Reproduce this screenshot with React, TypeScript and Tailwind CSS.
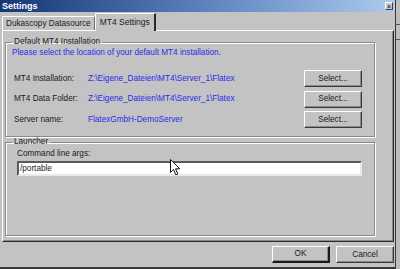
import React from "react";

const Btn = ({ label, main = false }: { label: string; main?: boolean }) => (
  <button
    className={
      "h-[17px] w-[58px] bg-[#c3c3c3] text-[#1a1a1a] border border-t-white border-l-white shadow-[inset_-1px_-1px_0_#8a8a8a] " +
      (main ? "border-r-[#1a1a1a] border-b-[#1a1a1a] border-r-2 border-b-2" : "border-r-[#3a3a3a] border-b-[#3a3a3a]")
    }
  >
    {label}
  </button>
);

const Row = ({ label, value }: { label: string; value: string }) => (
  <div className="flex items-center h-[17px]">
    <span className="w-[74px] pl-[8px] box-content">{label}</span>
    <span className="flex-1 text-[#2b2bea]">{value}</span>
    <Btn label="Select..." />
  </div>
);

const App = () => {
  return (
    <div className="w-[400px] h-[269px] overflow-hidden flex bg-[#c3c3c3] font-['Liberation_Sans',Arial,sans-serif] text-[8.2px] leading-[10px] text-[#1a1a1a] relative">
      <div className="w-[395px] flex flex-col">
        {/* title bar */}
        <div className="h-[12px] flex items-center justify-between bg-gradient-to-r from-[#163576] via-[#5a80bc] to-[#aecbee] pl-[2px] pr-[1px]">
          <span className="text-white font-bold text-[9px]">Settings</span>
          <span className="w-[8px] h-[8px] mr-[1px] bg-[#c8c8c8] border border-t-white border-l-white border-r-[#404040] border-b-[#404040] flex items-center justify-center text-[7px] leading-none text-black">
            ×
          </span>
        </div>

        {/* tabs */}
        <div className="h-[18px] flex items-end pl-[2px]">
          <div className="h-[14px] px-[3px] flex items-center border-t border-l border-white border-r border-r-[#6a6a6a]">
            Dukascopy Datasource
          </div>
          <div className="h-[18px] -mb-px relative z-10 px-[4px] pb-[2px] flex items-center bg-[#c3c3c3] border-t border-l border-white border-r-2 border-r-[#2a2a2a] text-[8.5px]">
            MT4 Settings
          </div>
        </div>

        {/* panel */}
        <div className="h-[212px] ml-[2px] mr-[1px] border border-t-white border-l-white border-r-[#2a2a2a] border-b-[#2a2a2a] shadow-[inset_-1px_-1px_0_#8a8a8a] pt-[6px] pl-[2px]">
          <fieldset className="w-[370px] h-[100px] border border-[#8a8a8a] shadow-[1px_1px_0_#fff,inset_1px_1px_0_#fff]">
            <legend className="ml-[6px] px-[2px]">Default MT4 Installation</legend>
            <div className="pl-[6px] mt-[1px] text-[#2b2bea]">
              Please select the location of your default MT4 installation.
            </div>
            <div className="flex flex-col gap-[3.5px] mt-[12px] pr-[12px]">
              <Row label="MT4 Installation:" value="Z:\Eigene_Dateien\MT4\Server_1\Flatex" />
              <Row label="MT4 Data Folder:" value="Z:\Eigene_Dateien\MT4\Server_1\Flatex" />
              <Row label="Server name:" value="FlatexGmbH-DemoServer" />
            </div>
          </fieldset>

          <fieldset className="w-[370px] h-[99px] border border-[#8a8a8a] shadow-[1px_1px_0_#fff,inset_1px_1px_0_#fff]">
            <legend className="ml-[6px] px-[2px]">Launcher</legend>
            <div className="pl-[11px] pr-[12px] mt-[2px]">
              <div>Command line args:</div>
              <div className="mt-[2px] h-[15px] bg-white border-2 border-t-[#5a5a5a] border-l-[#5a5a5a] border-r-[#e8e8e8] border-b-[#e8e8e8] flex items-center pl-[1px]">
                /portable
              </div>
            </div>
          </fieldset>
        </div>

        {/* footer */}
        <div className="flex-1 flex justify-end items-start gap-[6px] pt-[4px] pr-[1px] border-b-2 border-b-[#3a3a3a]">
          <Btn label="OK" main />
          <Btn label="Cancel" />
        </div>
      </div>

      {/* background strip at the right */}
      <div className="flex-1 border-l border-l-[#3a3a3a] bg-[#bdbdbd] flex flex-col">
        <div className="h-[24px]" />
        <div className="h-px bg-[#555]" />
        <div className="h-[14px]" />
        <div className="h-px bg-[#555]" />
      </div>

      {/* mouse pointer */}
      <svg className="absolute left-[170px] top-[159px]" width="11" height="17" viewBox="0 0 11 17">
        <path d="M0.5 0.5 L0.5 13.5 L3.5 10.5 L5.8 15.8 L7.8 15 L5.6 9.8 L9.8 9.8 Z" fill="#fff" stroke="#111" strokeWidth="1" />
      </svg>
    </div>
  );
};

export default App;
